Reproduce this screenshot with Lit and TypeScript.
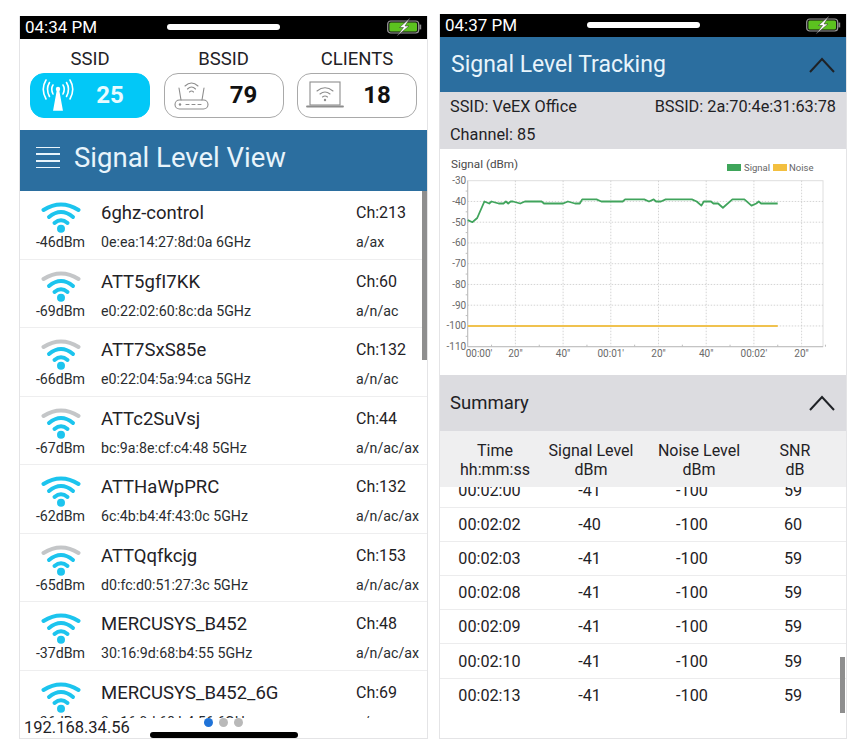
import { LitElement, html, css, svg } from 'lit';
import { customElement } from 'lit/decorators.js';

const NETWORKS = [
  { name: '6ghz-control', dbm: -46, mac: '0e:ea:14:27:8d:0a 6GHz', ch: 213, band: 'a/ax', weak: false },
  { name: 'ATT5gfI7KK', dbm: -69, mac: 'e0:22:02:60:8c:da 5GHz', ch: 60, band: 'a/n/ac', weak: true },
  { name: 'ATT7SxS85e', dbm: -66, mac: 'e0:22:04:5a:94:ca 5GHz', ch: 132, band: 'a/n/ac', weak: true },
  { name: 'ATTc2SuVsj', dbm: -67, mac: 'bc:9a:8e:cf:c4:48 5GHz', ch: 44, band: 'a/n/ac/ax', weak: true },
  { name: 'ATTHaWpPRC', dbm: -62, mac: '6c:4b:b4:4f:43:0c 5GHz', ch: 132, band: 'a/n/ac/ax', weak: false },
  { name: 'ATTQqfkcjg', dbm: -65, mac: 'd0:fc:d0:51:27:3c 5GHz', ch: 153, band: 'a/n/ac/ax', weak: true },
  { name: 'MERCUSYS_B452', dbm: -37, mac: '30:16:9d:68:b4:55 5GHz', ch: 48, band: 'a/n/ac/ax', weak: false },
  { name: 'MERCUSYS_B452_6G', dbm: -36, mac: '3a:16:9d:68:b4:56 6GHz', ch: 69, band: 'a/ax', weak: false },
];

const SUMMARY = [
  ['00:02:00', -41, -100, 59],
  ['00:02:02', -40, -100, 60],
  ['00:02:03', -41, -100, 59],
  ['00:02:08', -41, -100, 59],
  ['00:02:09', -41, -100, 59],
  ['00:02:10', -41, -100, 59],
  ['00:02:13', -41, -100, 59],
];

// [seconds, dBm] read off the trace
const SIGNAL: [number, number][] = [
  [0, -49], [2, -50], [4, -48], [7, -40], [9, -41], [10, -40], [13, -41], [15, -41], [16, -40], [17, -41],
  [18, -40], [19, -40], [22, -41], [24, -40], [31, -40], [32, -41], [40, -41], [42, -40], [45, -41], [47, -41],
  [48, -39], [54, -39], [56, -40], [65, -40], [66, -39], [74, -39], [76, -40], [78, -39], [79, -40], [81, -40],
  [83, -39], [94, -39], [96, -40], [98, -42], [99, -40], [102, -40], [103, -41], [105, -41], [107, -43],
  [111, -39], [116, -39], [119, -42], [121, -41], [122, -40], [123, -41], [130, -41],
];

const wifi = (weak: boolean) => html`
  <svg class="wifi" viewBox="0 0 40 33" width="40" height="33" fill="none" stroke-width="4" stroke-linecap="round">
    <path d="M2.5 10 Q20 -1 37.5 10" stroke=${weak ? '#c4c6c8' : '#1cc4ee'} />
    <path d="M8 17 Q20 7 32 17" stroke="#1cc4ee" />
    <path d="M13.5 23 Q20 17.5 26.5 23" stroke="#1cc4ee" />
    <circle cx="20" cy="28.7" r="4" fill="#1cc4ee" stroke="none" />
  </svg>
`;

const battery = html`
  <svg class="battery" viewBox="0 0 35 18" width="35" height="18">
    <rect x="0.7" y="3" width="31" height="12" rx="3" fill="#111" stroke="#9a9a9a" stroke-width="1.2" />
    <rect x="2.4" y="4.6" width="27.6" height="8.8" rx="1.5" fill="#5cc21f" />
    <rect x="32.4" y="6.6" width="1.8" height="4.8" fill="#8a8a8a" />
    <path d="M23 0 L12.5 9.5 L16.5 9.5 L10 18 L22 8 L18 8 Z" fill="#fff" stroke="#2a2a2a" stroke-width="0.5" />
  </svg>
`;

const chevron = html`
  <svg class="chevron" viewBox="0 0 26 16" width="26" height="16" fill="none" stroke="#1f2226" stroke-width="2">
    <path d="M1 15 L13 2 L25 15" />
  </svg>
`;

const antennaIcon = html`
  <svg viewBox="0 0 36 32" width="36" height="32" fill="none" stroke="#fff" stroke-width="1.6" stroke-linecap="round">
    <path d="M18 9 L22 31 L14 31 Z" fill="#fff" />
    <circle cx="18" cy="10" r="2.2" fill="#fff" stroke="none" />
    <path d="M13 6 Q10.5 10 13 15 M23 6 Q25.5 10 23 15" />
    <path d="M9.5 3.5 Q5.5 10 9.5 17.5 M26.5 3.5 Q30.5 10 26.5 17.5" />
    <path d="M6 1 Q0.5 10 6 20 M30 1 Q35.5 10 30 20" />
  </svg>
`;

const routerIcon = html`
  <svg viewBox="0 0 36 32" width="36" height="32" fill="none" stroke="#8d8d8d" stroke-width="1.1" stroke-linecap="round">
    <rect x="1" y="21" width="33" height="9" rx="4.5" />
    <path d="M7 21 L5 9 M28 21 L30 9" />
    <path d="M11 7 Q17.5 1 24 7 M13.5 10 Q17.5 6 21.5 10 M15.5 13 Q17.5 11 19.5 13" />
    <circle cx="6" cy="25.5" r="1.2" fill="#8d8d8d" stroke="none" />
    <path d="M12 25.5 h3 M18 25.5 h3 M24 25.5 h3" />
  </svg>
`;

const laptopIcon = html`
  <svg viewBox="0 0 38 30" width="38" height="30" fill="none" stroke="#8d8d8d" stroke-width="1.1" stroke-linecap="round">
    <rect x="4" y="2" width="30" height="23" />
    <path d="M1 26.5 H37" stroke-width="1.8" />
    <path d="M11 11 Q19 4.5 27 11 M14 14 Q19 10 24 14 M16.5 17 Q19 15 21.5 17" />
    <circle cx="19" cy="20" r="1.2" fill="#8d8d8d" stroke="none" />
  </svg>
`;

@customElement('signal-chart')
export class SignalChart extends LitElement {
  static styles = css`
    :host {
      display: block;
      height: 226px;
      background: #fff;
    }
    svg {
      display: block;
    }
    text {
      font-family: Roboto, sans-serif;
      font-size: 10px;
      fill: #6a6a6a;
    }
    .title {
      font-size: 11.7px;
      fill: #4a4a4a;
    }
    .legend {
      font-size: 9.5px;
      fill: #666;
    }
    .grid {
      stroke: #c9c9c9;
      stroke-width: 0.8;
      stroke-dasharray: 1.5 1.5;
    }
    .axis {
      stroke: #bdbdbd;
      stroke-width: 1;
    }
    .box {
      fill: none;
      stroke: #dedede;
    }
    .trace {
      fill: none;
      stroke: #40a45c;
      stroke-width: 1.8;
      stroke-linejoin: round;
    }
    .noise {
      stroke: #f0c24f;
      stroke-width: 2;
    }
  `;

  render() {
    // chart is laid out in the panel's own pixels, panel origin at 440,149
    const LEFT = 27.7;
    const RIGHT = 383;
    const TOP = 31.7;
    const PER_10DB = 20.75;
    const PER_SEC = 2.385;
    const xOf = (s: number) => LEFT + s * PER_SEC;
    const yOf = (db: number) => TOP + ((-30 - db) / 10) * PER_10DB;
    const BOTTOM = yOf(-110);

    const levels = [-30, -40, -50, -60, -70, -80, -90, -100, -110];
    const ticks = [
      { s: 0, label: "00:00'", lx: 39 },
      { s: 20, label: '20"' },
      { s: 40, label: '40"' },
      { s: 60, label: "00:01'" },
      { s: 80, label: '20"' },
      { s: 100, label: '40"' },
      { s: 120, label: "00:02'" },
      { s: 140, label: '20"' },
    ];
    const minorY = levels.slice(0, -1).map((l) => l - 5);
    const minorX = ticks.map((t) => t.s + 10);
    const line = SIGNAL.map(([s, db]) => `${xOf(s).toFixed(1)},${yOf(db).toFixed(1)}`).join(' ');

    return html`
      <svg viewBox="0 0 406 226" width="406" height="226">
        <text class="title" x="11" y="19">Signal (dBm)</text>
        <rect x="287" y="15" width="14" height="7" fill="#3ea55a" />
        <text class="legend" x="304" y="22">Signal</text>
        <rect x="333" y="15" width="14" height="7" fill="#f3bf3f" />
        <text class="legend" x="349" y="22">Noise</text>

        <rect class="box" x=${LEFT} y=${TOP} width=${RIGHT - LEFT} height=${BOTTOM - TOP} />
        ${levels.slice(1, -1).map((l) => svg`<line class="grid" x1=${LEFT} x2=${RIGHT} y1=${yOf(l)} y2=${yOf(l)} />`)}
        ${ticks.slice(1).map((t) => svg`<line class="grid" x1=${xOf(t.s)} x2=${xOf(t.s)} y1=${TOP} y2=${BOTTOM} />`)}

        <line class="axis" x1=${LEFT} x2=${LEFT} y1=${TOP} y2=${BOTTOM} />
        <line class="axis" x1=${LEFT} x2=${RIGHT} y1=${BOTTOM} y2=${BOTTOM} />
        ${minorY.map((l) => svg`<line class="axis" x1=${LEFT - 2} x2=${LEFT} y1=${yOf(l)} y2=${yOf(l)} />`)}
        ${minorX.map((s) => svg`<line class="axis" x1=${xOf(s)} x2=${xOf(s)} y1=${BOTTOM - 2} y2=${BOTTOM} />`)}

        ${levels.map((l) => svg`<text x=${LEFT - 1.5} y=${yOf(l) + 3.5} text-anchor="end">${l}</text>`)}
        ${ticks.map((t) => svg`<text x=${t.lx ?? xOf(t.s)} y=${BOTTOM + 10.5} text-anchor="middle">${t.label}</text>`)}

        <line class="noise" x1=${LEFT} x2=${xOf(130)} y1=${yOf(-100)} y2=${yOf(-100)} />
        <polyline class="trace" points=${line} />
      </svg>
    `;
  }
}

@customElement('app-root')
export class AppRoot extends LitElement {
  static styles = css`
    :host {
      display: block;
      width: 863px;
      height: 753px;
      background: #fff;
      font-family: Roboto, sans-serif;
      color: #1f2226;
      overflow: hidden;
    }
    .page {
      display: flex;
      align-items: flex-start;
      gap: 11px;
      padding: 14px 0 0 19px;
    }
    .phone {
      position: relative;
      box-sizing: border-box;
      display: flex;
      flex-direction: column;
      overflow: hidden;
      background: #fff;
      border: 1px solid #e4e4e6;
      border-top: 0;
    }
    .left {
      width: 409px;
      height: 723px;
      margin-top: 2px;
    }
    .right {
      width: 408px;
      height: 725px;
    }
    .status {
      flex: none;
      height: 22.5px;
      display: grid;
      grid-template-columns: 1fr 113px 1fr;
      align-items: center;
      padding: 0 5px 0 5px;
      background: #000;
      color: #fff;
      font-size: 17px;
    }
    .pill {
      height: 6px;
      border-radius: 3px;
      background: #fff;
      margin-bottom: 1px;
    }
    .battery {
      justify-self: end;
      overflow: visible;
    }
    .tabs {
      flex: none;
      height: 91.5px;
      box-sizing: border-box;
      display: grid;
      grid-template-columns: repeat(3, 120px);
      justify-content: space-between;
      padding: 11px 10px 0;
      background: #fff;
    }
    .tab {
      display: flex;
      flex-direction: column;
      align-items: center;
      gap: 4px;
      font-size: 18.5px;
    }
    .tab-label {
      line-height: 19px;
    }
    .tab-btn {
      box-sizing: border-box;
      width: 120px;
      height: 45px;
      display: grid;
      grid-template-columns: 46px 1fr;
      align-items: center;
      justify-items: center;
      border: 1px solid #a9a9a9;
      border-radius: 14px;
      padding: 0 10px 0 4px;
      color: #111;
      font-size: 24px;
      font-weight: 700;
    }
    .tab-btn.active {
      background: #02c8f7;
      border-color: #02c8f7;
      color: #e9fbff;
    }
    .band {
      flex: none;
      display: flex;
      align-items: center;
      justify-content: space-between;
      background: #2b6e9f;
      color: #e8f4fb;
    }
    .view-band {
      box-sizing: border-box;
      height: 61px;
      justify-content: flex-start;
      gap: 14px;
      padding: 0 0 6px 16px;
      font-size: 27.5px;
    }
    .burger {
      width: 24px;
      height: 22px;
      display: flex;
      flex-direction: column;
      justify-content: space-between;
    }
    .burger span {
      height: 1.5px;
      background: #e8f4fb;
    }
    .track-band {
      box-sizing: border-box;
      height: 55px;
      padding: 1px 11px 0;
      font-size: 23px;
    }
    .list {
      flex: 1;
      overflow: hidden;
    }
    .row {
      box-sizing: border-box;
      height: 68.5px;
      display: grid;
      grid-template-columns: 81px 255px 1fr;
      grid-template-rows: 41px 1fr;
      border-bottom: 1.5px solid #eeeeef;
    }
    .signal-icon {
      display: flex;
      justify-content: center;
      padding-top: 9px;
    }
    .wifi {
      display: block;
    }
    .name {
      font-size: 18.5px;
      line-height: 44px;
    }
    .ch {
      font-size: 16px;
      line-height: 44px;
    }
    .dbm,
    .mac,
    .mode {
      font-size: 14.2px;
      line-height: 20px;
      color: #2a2d30;
    }
    .dbm {
      text-align: center;
    }
    .thumb {
      position: absolute;
      width: 5px;
      background: #8e8e8e;
    }
    .list-thumb {
      right: 0;
      top: 175px;
      height: 169px;
    }
    .table-thumb {
      right: 1px;
      top: 643px;
      height: 56px;
    }
    .footer {
      position: absolute;
      left: 0;
      right: 0;
      bottom: 0;
      height: 20px;
      background: #fff;
    }
    .ip {
      position: absolute;
      left: 4px;
      bottom: 1px;
      font-size: 16.5px;
      line-height: 19px;
    }
    .dots {
      position: absolute;
      left: 184px;
      top: 0;
      display: flex;
      gap: 6px;
    }
    .dots span {
      width: 9px;
      height: 9px;
      border-radius: 50%;
      background: #b9b9b9;
    }
    .dots .on {
      background: #1f73d8;
    }
    .home {
      position: absolute;
      left: 130px;
      bottom: 0;
      width: 148px;
      height: 6px;
      border-radius: 3px;
      background: #000;
    }
    .info {
      flex: none;
      height: 57px;
      box-sizing: border-box;
      padding: 1px 10px 0;
      display: grid;
      grid-template-columns: 1fr auto;
      grid-auto-rows: 28px;
      align-items: center;
      background: #dcdce0;
      font-size: 16.3px;
    }
    .summary-band {
      flex: none;
      height: 56px;
      display: flex;
      align-items: center;
      justify-content: space-between;
      padding: 0 11px 0 10px;
      background: #dcdce0;
      font-size: 18.5px;
    }
    .chevron {
      display: block;
    }
    .head {
      flex: none;
      height: 56px;
      box-sizing: border-box;
      padding: 10px 0 0 1px;
      display: grid;
      grid-template-columns: 108px 84px 132px 60px;
      text-align: center;
      background: #efeff0;
      font-size: 16px;
      line-height: 19px;
    }
    .head div {
      white-space: nowrap;
      display: flex;
      justify-content: center;
    }
    .tbody {
      flex: 1;
      overflow: hidden;
    }
    .tbody-inner {
      margin-top: -13px;
    }
    .trow {
      box-sizing: border-box;
      height: 34.2px;
      padding-left: 1px;
      display: grid;
      grid-template-columns: 97px 103px 102px 100px;
      align-items: center;
      text-align: center;
      font-size: 16.2px;
      border-bottom: 1.5px solid #ececed;
    }
    .trow:last-child {
      border-bottom: 0;
    }
  `;

  render() {
    return html`
      <div class="page">
        <section class="phone left">
          <div class="status">
            <span>04:34 PM</span>
            <span class="pill"></span>
            ${battery}
          </div>
          <div class="tabs">
            <div class="tab">
              <span class="tab-label">SSID</span>
              <div class="tab-btn active">${antennaIcon}<span>25</span></div>
            </div>
            <div class="tab">
              <span class="tab-label">BSSID</span>
              <div class="tab-btn">${routerIcon}<span>79</span></div>
            </div>
            <div class="tab">
              <span class="tab-label">CLIENTS</span>
              <div class="tab-btn">${laptopIcon}<span>18</span></div>
            </div>
          </div>
          <div class="band view-band">
            <div class="burger"><span></span><span></span><span></span><span></span></div>
            <span>Signal Level View</span>
          </div>
          <div class="list">
            ${NETWORKS.map(
              (n) => html`
                <div class="row">
                  <div class="signal-icon">${wifi(n.weak)}</div>
                  <div class="name">${n.name}</div>
                  <div class="ch">Ch:${n.ch}</div>
                  <div class="dbm">${n.dbm}dBm</div>
                  <div class="mac">${n.mac}</div>
                  <div class="mode">${n.band}</div>
                </div>
              `,
            )}
          </div>
          <div class="thumb list-thumb"></div>
          <div class="footer">
            <span class="ip">192.168.34.56</span>
            <div class="dots"><span class="on"></span><span></span><span></span></div>
            <div class="home"></div>
          </div>
        </section>

        <section class="phone right">
          <div class="status">
            <span>04:37 PM</span>
            <span class="pill"></span>
            ${battery}
          </div>
          <div class="band track-band">
            <span>Signal Level Tracking</span>
            ${chevron}
          </div>
          <div class="info">
            <span>SSID: VeEX Office</span>
            <span>BSSID: 2a:70:4e:31:63:78</span>
            <span>Channel: 85</span>
          </div>
          <signal-chart></signal-chart>
          <div class="summary-band">
            <span>Summary</span>
            ${chevron}
          </div>
          <div class="head">
            <div>Time<br />hh:mm:ss</div>
            <div>Signal Level<br />dBm</div>
            <div>Noise Level<br />dBm</div>
            <div>SNR<br />dB</div>
          </div>
          <div class="tbody">
            <div class="tbody-inner">
              ${SUMMARY.map(
                (r) => html`
                  <div class="trow">
                    <span>${r[0]}</span><span>${r[1]}</span><span>${r[2]}</span><span>${r[3]}</span>
                  </div>
                `,
              )}
            </div>
          </div>
          <div class="thumb table-thumb"></div>
        </section>
      </div>
    `;
  }
}
